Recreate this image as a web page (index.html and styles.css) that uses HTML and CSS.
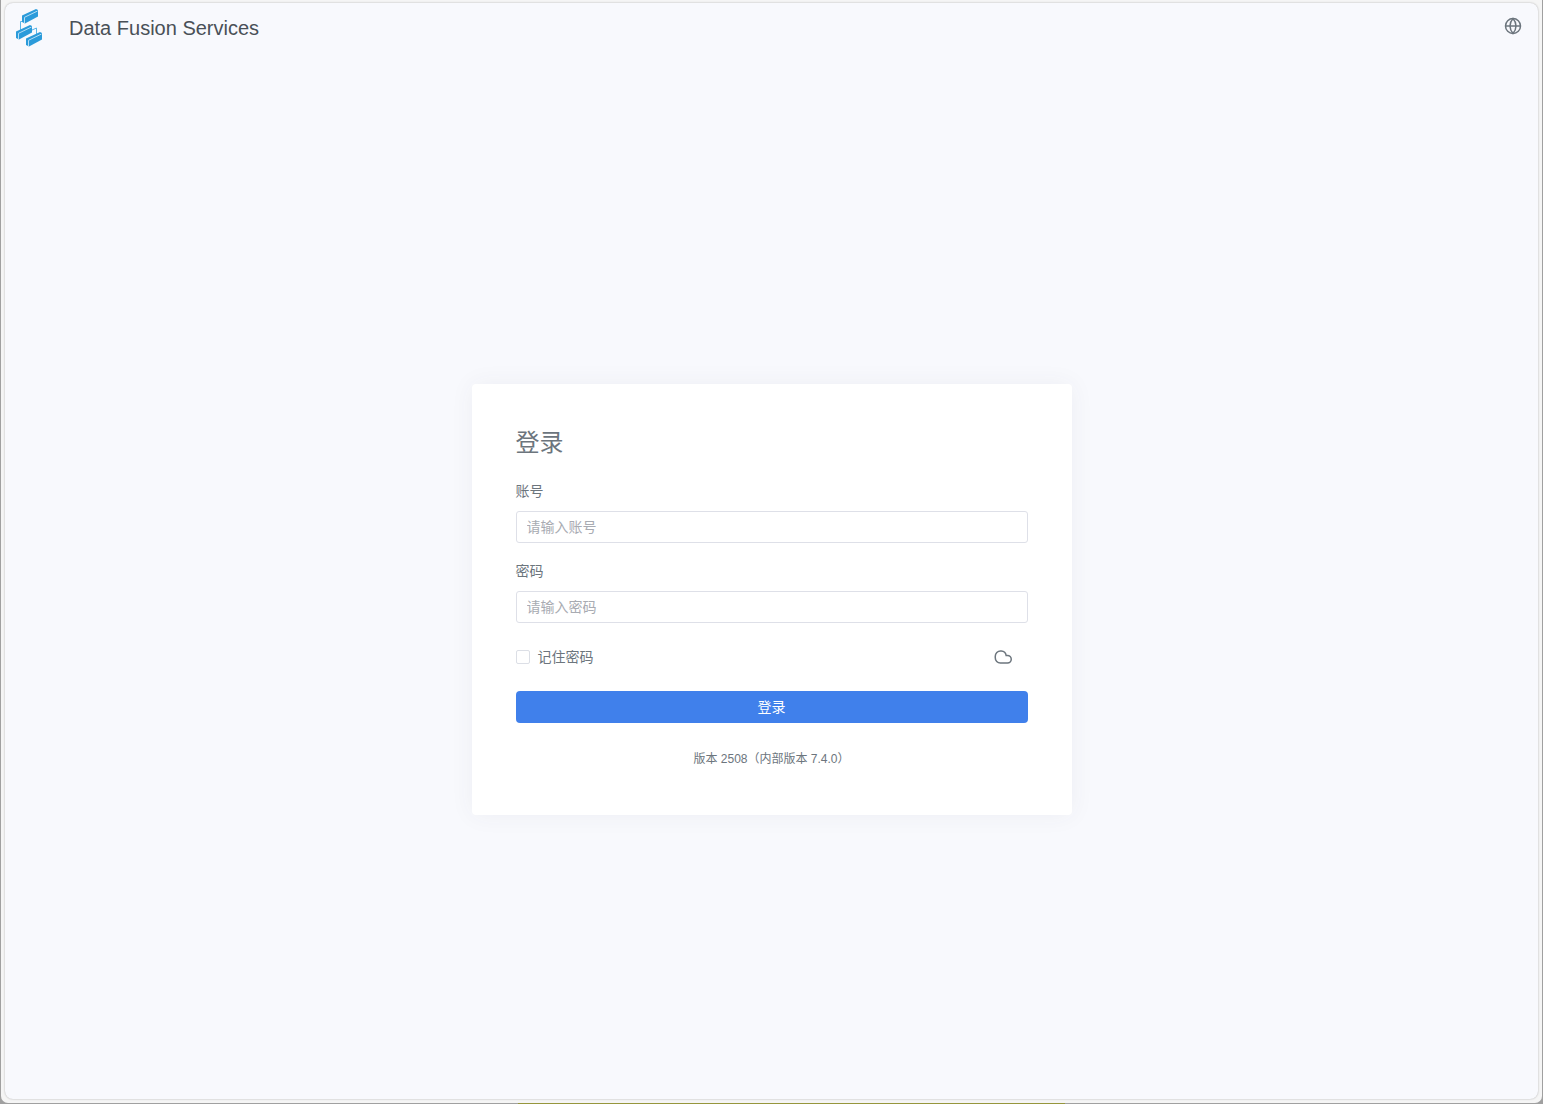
FILE: index.html
```html
<!DOCTYPE html>
<html lang="zh-CN">
<head>
<meta charset="utf-8">
<title>Data Fusion Services</title>
<link rel="stylesheet" href="styles.css">
</head>
<body>
<div class="window">
    <div class="page">
        <header class="header">
            <svg class="logo" viewBox="0 -1 28 40" aria-hidden="true">
                <path class="logo-line" d="M5.500 25V12.500H9M16 21.500L21.500 19V25"/>
                <g id="block">
                    <path class="logo-side" d="M7 6.500L21 0L23 1V7.500L10 14.500L7 13Z"/>
                    <path class="logo-edge" d="M9.500 14V8.300L22.500 2"/>
                </g>
                <use href="#block" x="-6" y="16"/>
                <use href="#block" x="4" y="23"/>
            </svg>
            <span class="title">Data Fusion Services</span>
            <button type="button" class="iconBtn" aria-label="语言">
                <svg class="icon" viewBox="0 0 24 24" aria-hidden="true">
                    <circle cx="12" cy="12" r="10"/>
                    <path d="M2 12h20M12 2a15.300 15.300 0 0 1 4 10 15.300 15.300 0 0 1-4 10 15.300 15.300 0 0 1-4-10 15.300 15.300 0 0 1 4-10z"/>
                </svg>
            </button>
        </header>
        <main class="main">
            <form class="loginBox" method="post">
                <h1>登录</h1>
                <label class="fieldLabel" for="user">账号</label>
                <input type="text" id="user" name="user" class="loginInput" autocomplete="off" placeholder="请输入账号">
                <label class="fieldLabel" for="password">密码</label>
                <input type="password" id="password" name="password" class="loginInput" placeholder="请输入密码">
                <div class="options">
                    <input type="checkbox" id="remember" name="remember" class="remember">
                    <label for="remember">记住密码</label>
                    <button type="button" class="iconBtn" aria-label="云服务">
                        <svg class="icon" viewBox="0 0 24 24" aria-hidden="true">
                            <path d="M18 20H8.500a6.800 6.800 0 0 1-6.800-7V11a7 7 0 0 1 7-7h1a7 7 0 0 1 6.500 6H18a5 5 0 0 1 0 10z"/>
                        </svg>
                    </button>
                </div>
                <button type="submit" class="loginBtn">登录</button>
                <p class="version">版本 2508（内部版本 7.4.0）</p>
            </form>
        </main>
    </div>
</div>
</body>
</html>
```

FILE: styles.css
```css
* {
    box-sizing: border-box;
}
body {
    margin: 0;
    background: linear-gradient(to right, #a0a0a0 33.6%, #96963c 33.6%, #96963c 69%, #a0a0a0 69%);
    color: #6c757d;
    font: 14px/20px "Liberation Sans", "Noto Sans CJK SC", sans-serif;
}
.window {
    display: flex;
    min-height: 100vh;
    padding: 3px 4px 4px;
    background-color: #f5f5f5;
    background-clip: padding-box;
    border: 1px solid transparent;
    border-top: 0;
    border-radius: 0 0 8px 8px;
}
.page {
    flex: 1;
    display: flex;
    flex-direction: column;
    background-color: #f8f9fd;
    border-radius: 8px;
    box-shadow: 0 0 2px rgba(0,0,0,0.3);
}
.header {
    display: flex;
    align-items: center;
    height: 50px;
    padding: 0 15px 0 10px;
}
.header .iconBtn {
    padding-bottom: 4px;
}
.logo {
    width: 28px;
    height: 40px;
}
.logo-line {
    fill: none;
    stroke: #5bb5e6;
}
.logo-side {
    fill: #2b9bda;
}
.logo-edge {
    fill: none;
    stroke: #b5def5;
}
.title {
    flex: 1;
    margin-left: 26px;
    color: #495057;
    font-size: 20px;
    line-height: 28px;
}
.iconBtn {
    display: flex;
    padding: 0;
    border: 0;
    background: none;
    color: #6c757d;
    cursor: pointer;
}
.icon {
    width: 20px;
    height: 20px;
    padding: 1px;
    overflow: visible;
    fill: none;
    stroke: currentColor;
    stroke-width: 2;
}
.main {
    flex: 1;
    display: flex;
    align-items: center;
    justify-content: center;
    padding-top: 47px;
}
.loginBox {
    display: flex;
    flex-direction: column;
    width: 600px;
    max-width: 100%;
    padding: 41px 44px 46px;
    background-color: #fff;
    border-radius: 4px;
    box-shadow: 0 0 24px rgba(60,70,90,0.06);
}
.loginBox h1 {
    margin: 0 0 20px;
    font-size: 24px;
    font-weight: 400;
    line-height: 36px;
}
.fieldLabel {
    margin-bottom: 10px;
}
.loginInput {
    height: 32px;
    margin-bottom: 18px;
    padding: 0 10px;
    border: 1px solid #dee0e8;
    border-radius: 3px;
    background-color: #fff;
    color: #495057;
    font: inherit;
}
.loginInput::placeholder {
    color: #a8abb2;
}
.loginInput:focus {
    border-color: #4080eb;
    outline: none;
}
.options {
    display: flex;
    align-items: center;
    height: 32px;
    margin-bottom: 18px;
    padding-right: 15px;
}
.options label {
    flex: 1;
    margin-left: 8px;
}
.remember {
    appearance: none;
    width: 14px;
    height: 14px;
    margin: 0;
    border: 1px solid #dcdfe6;
    border-radius: 2px;
    background-color: #fff;
}
.remember:checked {
    background-color: #4080eb;
}
.loginBtn {
    height: 32px;
    border: 0;
    border-radius: 4px;
    background-color: #4080eb;
    color: #fff;
    font: inherit;
    cursor: pointer;
}
.version {
    margin: 26px 0 0;
    font-size: 12px;
    text-align: center;
}
```
